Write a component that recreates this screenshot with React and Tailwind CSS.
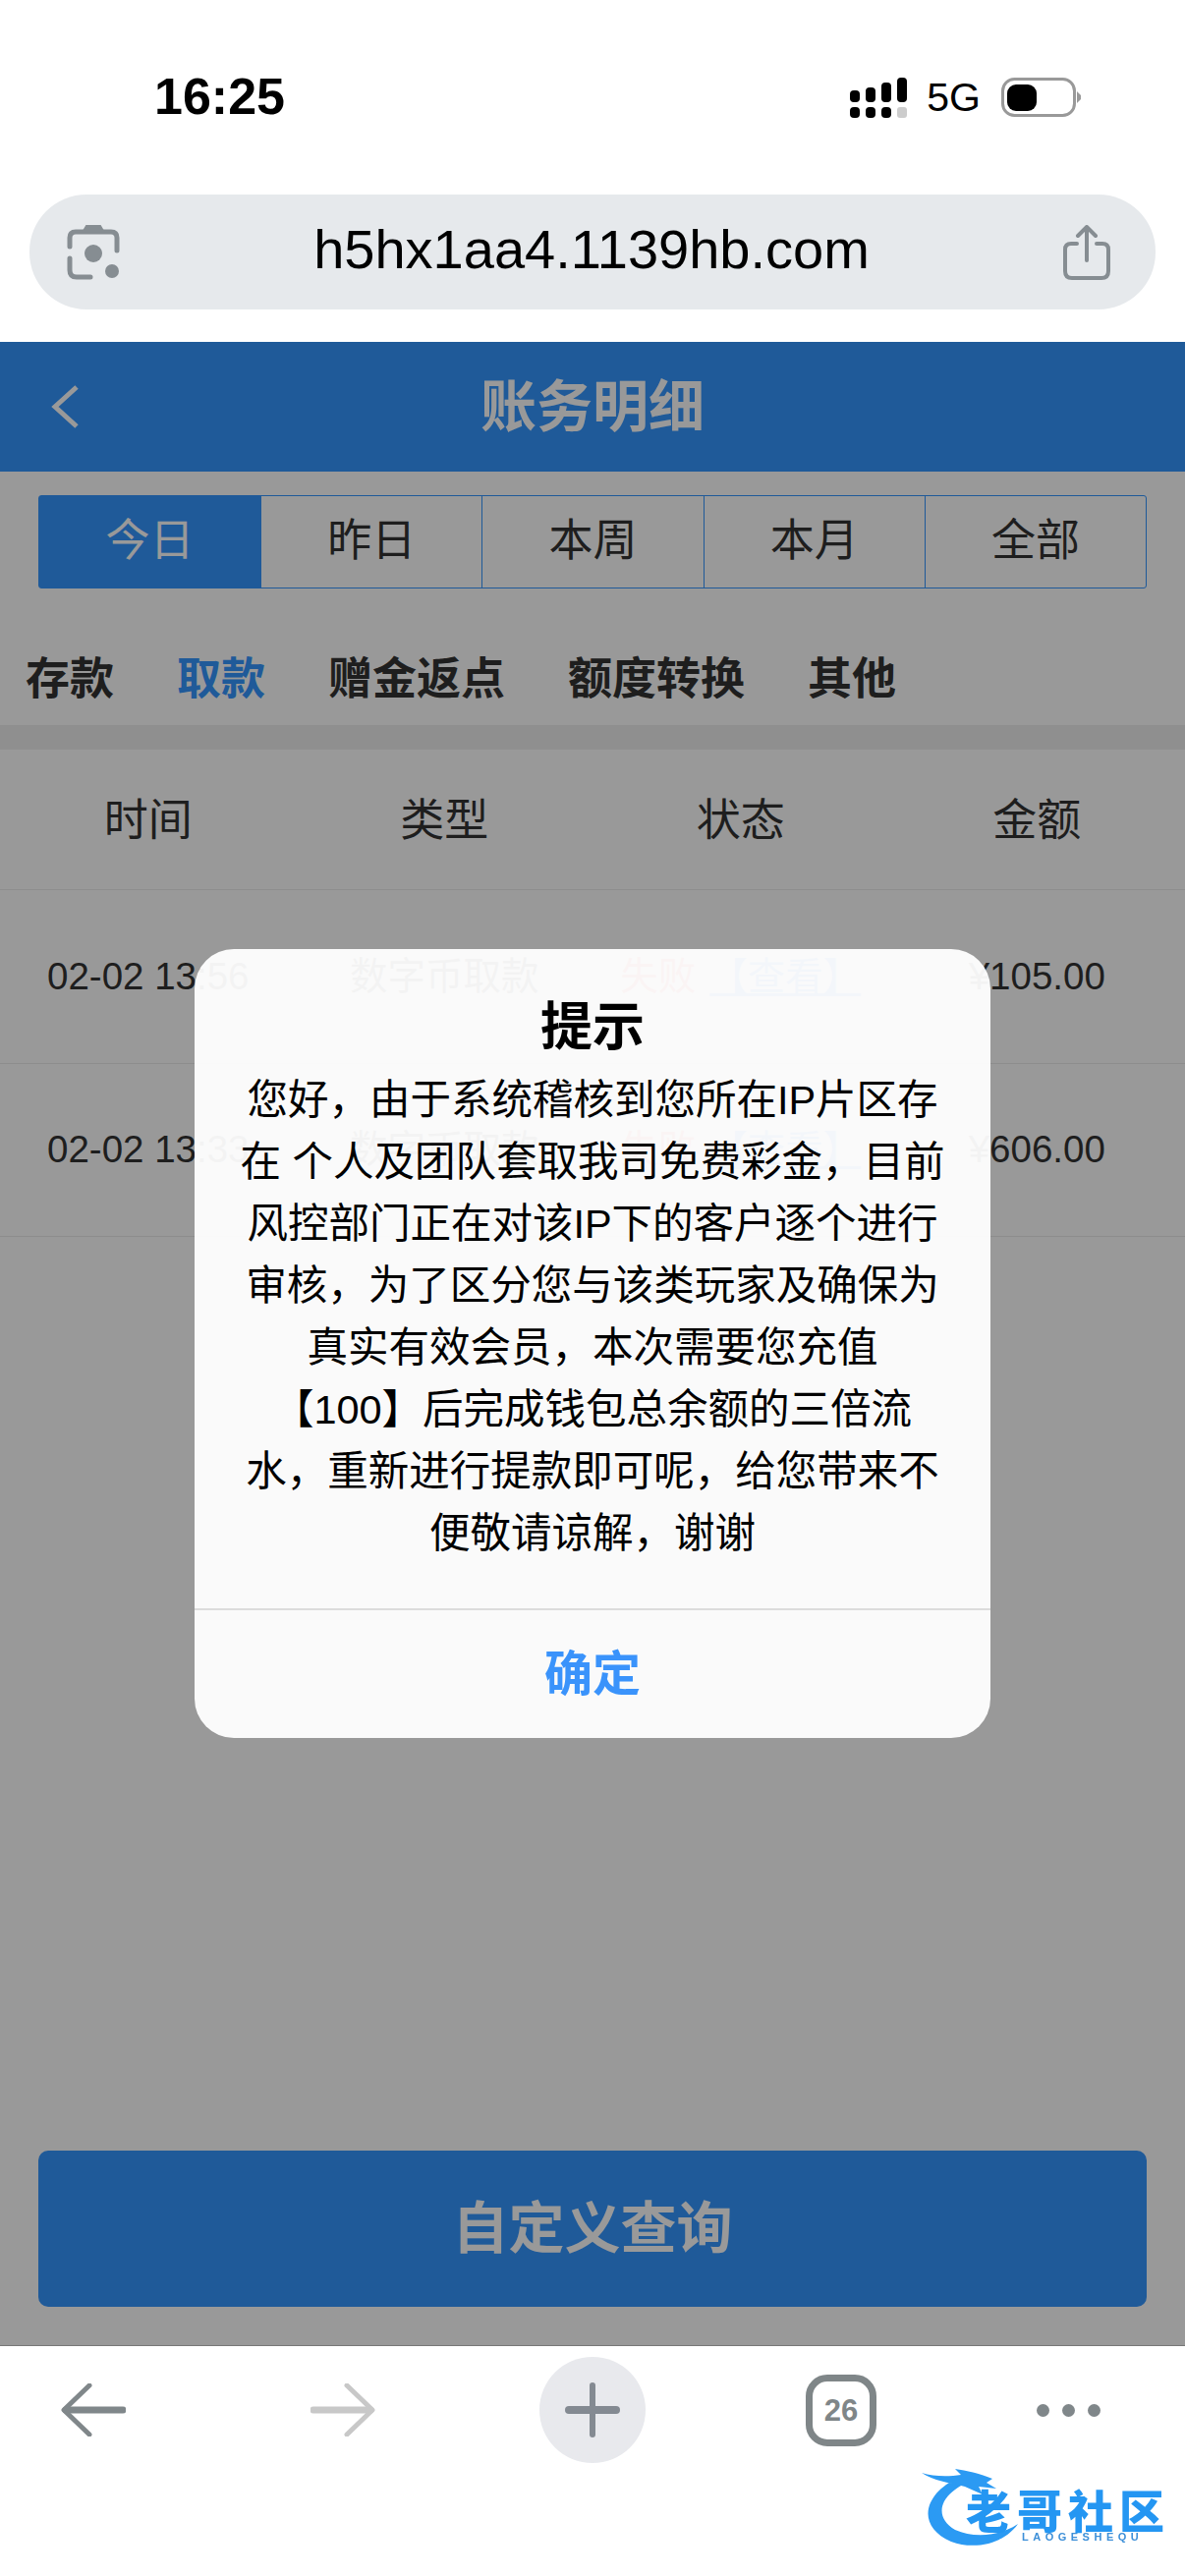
import React from "react";

const rangeTabs = ["今日", "昨日", "本周", "本月", "全部"];
const categories = ["存款", "取款", "赠金返点", "额度转换", "其他"];
const columns = ["时间", "类型", "状态", "金额"];
const records = [
  { time: "02-02 13:56", amount: "¥105.00" },
  { time: "02-02 13:33", amount: "¥606.00" },
];
const noticeLines = [
  "您好，由于系统稽核到您所在IP片区存",
  "在 个人及团队套取我司免费彩金，目前",
  "风控部门正在对该IP下的客户逐个进行",
  "审核，为了区分您与该类玩家及确保为",
  "真实有效会员，本次需要您充值",
  "【100】后完成钱包总余额的三倍流",
  "水，重新进行提款即可呢，给您带来不",
  "便敬请谅解，谢谢",
];

function StatusIcons() {
  return (
    <div className="flex items-center">
      <svg width="58" height="41" viewBox="0 0 58 41" fill="#000">
        <rect x="0" y="13" width="10" height="12" rx="4" />
        <rect x="16" y="10" width="10" height="15" rx="4" />
        <rect x="32" y="5" width="10" height="20" rx="4" />
        <rect x="48" y="0" width="10" height="25" rx="4" />
        <rect x="0" y="30" width="10" height="11" rx="4" />
        <rect x="16" y="30" width="10" height="11" rx="4" />
        <rect x="32" y="30" width="10" height="11" rx="4" />
        <rect x="48" y="30" width="10" height="11" rx="3" fill="#cccccc" />
      </svg>
      <span className="ml-[20px] text-[41px] leading-none text-black">5G</span>
      <svg className="ml-[21px]" width="81" height="40" viewBox="0 0 81 40">
        <rect x="1.5" y="1.5" width="73" height="37" rx="12" fill="none" stroke="#999999" strokeWidth="3" />
        <rect x="6" y="7" width="30" height="27" rx="9" fill="#000" />
        <path d="M77 14 L81 18 Q81.500 20 81 22 L77 26 Z" fill="#999999" />
      </svg>
    </div>
  );
}

function LensIcon() {
  return (
    <svg width="54" height="56" viewBox="0 0 54 56" fill="none" stroke="#868d92" strokeWidth="5" strokeLinecap="round">
      <path d="M3 22 V13 Q3 7 9 7 H45 Q51 7 51 13 V26" />
      <path d="M3 34 V46 Q3 53 10 53 H24" />
      <path d="M17 6 L20 1 H34 L37 6 Z" fill="#868d92" strokeWidth="2" />
      <circle cx="27" cy="29" r="9" fill="#868d92" stroke="none" />
      <circle cx="46" cy="47" r="7" fill="#868d92" stroke="none" />
    </svg>
  );
}

function ShareIcon() {
  return (
    <svg width="48" height="56" viewBox="0 0 48 56" fill="none" stroke="#868d92" strokeWidth="4" strokeLinecap="round" strokeLinejoin="round">
      <path d="M14 19 H8 Q2 19 2 25 V47 Q2 54 9 54 H39 Q46 54 46 47 V25 Q46 19 40 19 H34" />
      <path d="M24 36 V3" />
      <path d="M15 11 L24 2 L33 11" />
    </svg>
  );
}

function ArrowIcon({ color, flip }) {
  return (
    <svg width="66" height="54" viewBox="0 0 66 54" fill="none" stroke={color} strokeLinecap="round" strokeLinejoin="round" className={flip ? "-scale-x-100" : ""}>
      <path d="M29 2 L3 27 L29 52" strokeWidth="5" />
      <path d="M5 27 H63" strokeWidth="7" />
    </svg>
  );
}

function Logo() {
  return (
    <div className="absolute left-[938px] top-[125px] w-[250px] h-[80px] blur-[0.7px]">
      <svg className="absolute left-0 top-0" width="110" height="80" viewBox="0 0 110 80" fill="none">
        <path d="M28 14 C0 32 -2 60 30 74 C54 83 84 76 98 56 C80 68 54 71 34 62 C14 50 16 30 42 16 Z" fill="#2b9af3" />
        <path d="M0 4 C12 8 28 8 40 6 L34 0 C46 2 58 4 72 10 L66 14 L76 20 L58 18 L62 26 L44 18 C28 14 12 12 0 4 Z" fill="#2b9af3" />
      </svg>
      <span className="absolute left-[45px] top-[28px] text-[46px] leading-[32px] font-black text-[#2496f2] whitespace-nowrap tracking-[6px]">老哥社区</span>
      <span className="absolute left-[102px] top-[64px] text-[11px] leading-[11px] font-bold text-[#3d8fd8] whitespace-nowrap tracking-[4.500px]">LAOGESHEQU</span>
    </div>
  );
}

export default function App() {
  return (
    <div className="relative w-[1206px] h-[2622px] flex flex-col overflow-hidden bg-white font-['Liberation_Sans','Noto_Sans_CJK_SC',sans-serif]">
      {/* browser chrome */}
      <div className="h-[198px] flex items-center justify-between pl-[157px] pr-[106px]">
        <span className="pb-[3px] text-[52px] leading-none font-bold text-black">16:25</span>
        <StatusIcons />
      </div>
      <div className="h-[150px] px-[30px]">
        <div className="h-[117px] rounded-[58px] bg-[#e6e9ec] flex items-center justify-between pl-[38px] pr-[46px]">
          <LensIcon />
          <span className="pb-[5px] text-[56px] leading-none text-black">h5hx1aa4.1139hb.com</span>
          <ShareIcon />
        </div>
      </div>

      {/* page under the dialog */}
      <div className="relative flex-1 flex flex-col">
        <header className="h-[132px] shrink-0 bg-[#3496ff] grid grid-cols-[1fr_auto_1fr] items-center px-[52px]">
          <svg width="30" height="44" viewBox="0 0 30 44" fill="none" stroke="#fff" strokeWidth="5">
            <path d="M26 2 L4 22 L26 42" />
          </svg>
          <h1 className="text-[57px] leading-none font-bold text-white">账务明细</h1>
          <div />
        </header>

        <div className="mt-[24px] mx-[39px] h-[95px] shrink-0 grid grid-cols-5 border border-[#3496ff] rounded-[3px]">
          {rangeTabs.map((tab, idx) => (
            <div
              key={tab}
              className={`flex items-center justify-center pb-[3px] text-[45px] leading-none ${
                idx === 0 ? "bg-[#3496ff] text-white" : "border-l border-[#3496ff] text-[#333333]"
              }`}
            >
              {tab}
            </div>
          ))}
        </div>

        <div className="h-[139px] shrink-0 flex items-start gap-[64px] pl-[26px] pt-[71px]">
          {categories.map((name, idx) => (
            <span key={name} className={`text-[45px] leading-[44px] font-bold ${idx === 1 ? "text-[#3496ff]" : "text-[#333333]"}`}>
              {name}
            </span>
          ))}
        </div>

        <div className="h-[25px] shrink-0 bg-[#eeeeee]" />

        <div className="h-[143px] shrink-0 grid grid-cols-4 items-center border-b border-[#ebebeb]">
          {columns.map((col) => (
            <span key={col} className="pt-[2px] text-center text-[45px] leading-none text-[#333333]">{col}</span>
          ))}
        </div>

        {records.map((row) => (
          <div key={row.time} className="h-[176.500px] shrink-0 grid grid-cols-4 items-center border-b border-[#ebebeb] text-[38.500px] leading-none text-center">
            <span className="text-[#333333] whitespace-nowrap">{row.time}</span>
            <span className="text-[#333333]">数字币取款</span>
            <div className="flex justify-center gap-[14px] whitespace-nowrap">
              <span className="text-[#ff4d4f]">失败</span>
              <span className="text-[#3496ff] underline underline-offset-4">【查看】</span>
            </div>
            <span className="text-[#333333]">{row.amount}</span>
          </div>
        ))}

        <div className="flex-1" />
        <div className="mb-[39px] mx-[39px] h-[159px] shrink-0 rounded-[10px] bg-[#3496ff] flex items-center justify-center">
          <span className="text-[57px] leading-none font-bold text-white">自定义查询</span>
        </div>

        {/* dim layer and dialog */}
        <div className="absolute inset-0 bg-black/40" />
        <div className="absolute left-[198px] top-[618px] w-[810px] rounded-[40px] bg-white/95 text-center">
          <h2 className="pt-[50px] text-[53px] leading-[60px] font-bold text-black">提示</h2>
          <div className="mt-[12px] pb-[45px] text-[41.500px] leading-[63px] text-black">
            {noticeLines.map((line) => (
              <div key={line} className="whitespace-pre">{line}</div>
            ))}
          </div>
          <div className="h-[132px] border-t-2 border-[#dcdcdc] flex items-center justify-center text-[49px] leading-none font-bold text-[#3a93fb]">
            确定
          </div>
        </div>
      </div>

      {/* browser toolbar */}
      <div className="relative h-[235px] shrink-0 border-t border-[#777777] bg-white">
        <div className="flex items-center h-[108px] mt-[11px] pl-[62px]">
          <ArrowIcon color="#80878a" />
          <div className="ml-[188px]">
            <ArrowIcon color="#c8c8c8" flip />
          </div>
          <div className="ml-[167px] w-[108px] h-[108px] rounded-full bg-[#e8e9ed] flex items-center justify-center">
            <svg width="56" height="56" viewBox="0 0 56 56" stroke="#848a92" strokeLinecap="round">
              <path d="M28 3 V53" strokeWidth="6" />
              <path d="M4 28 H52" strokeWidth="8" />
            </svg>
          </div>
          <div className="ml-[163px] w-[72px] h-[73px] rounded-[22px] border-[7px] border-[#7f8688] flex items-center justify-center text-[31px] leading-none font-bold text-[#7f8688]">
            26
          </div>
          <div className="ml-[163px] flex gap-[13px]">
            <div className="w-[13px] h-[13px] rounded-full bg-[#80878a]" />
            <div className="w-[13px] h-[13px] rounded-full bg-[#80878a]" />
            <div className="w-[13px] h-[13px] rounded-full bg-[#80878a]" />
          </div>
        </div>
        <Logo />
      </div>
    </div>
  );
}
